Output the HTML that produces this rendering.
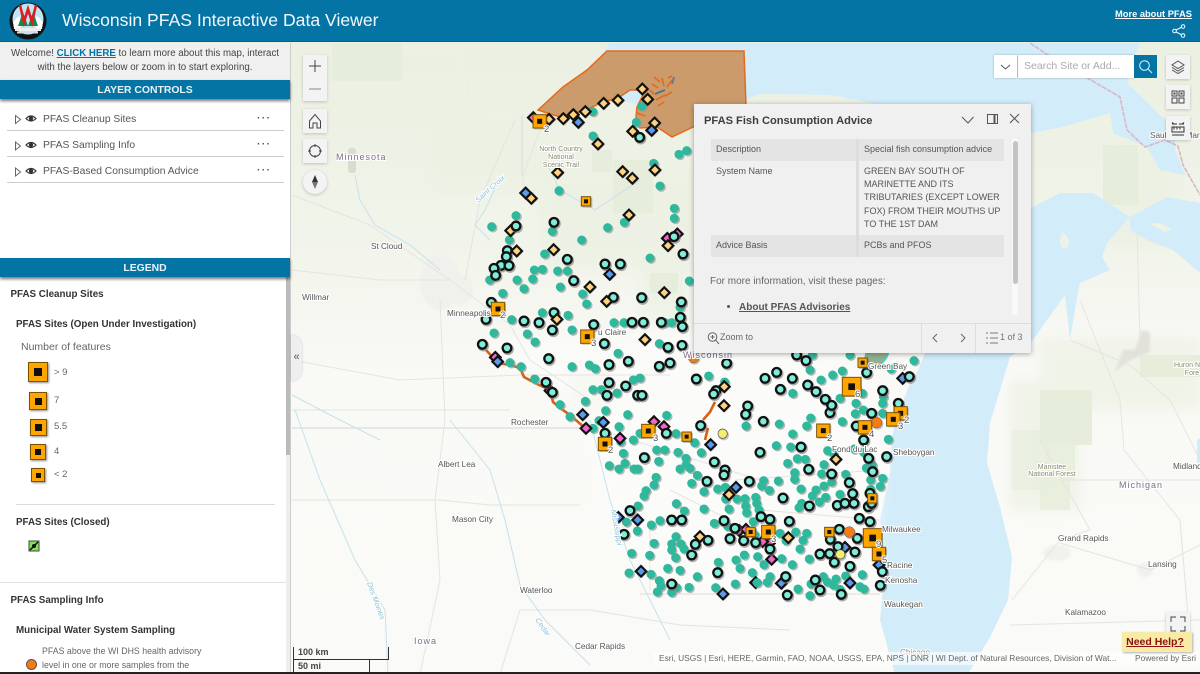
<!DOCTYPE html>
<html lang="en"><head><meta charset="utf-8"><title>Wisconsin PFAS Interactive Data Viewer</title>
<style>
*{box-sizing:border-box}
html,body{margin:0;padding:0;width:1200px;height:674px;overflow:hidden;background:#fff;font-family:"Liberation Sans",sans-serif}
.abs{position:absolute}
#map{position:absolute;left:0;top:0}
#hdr{position:absolute;left:0;top:0;width:1200px;height:42px;background:#0474a5;border-bottom:1px solid #03618a;color:#fff}
#title{position:absolute;left:62px;top:9px;font-size:17.6px;line-height:22px;white-space:nowrap;color:#f4f9fb}
#more{position:absolute;right:8px;top:8px;font-size:9.3px;font-weight:bold;text-decoration:underline;line-height:12px}
#panel{position:absolute;left:0;top:43px;width:291px;height:631px;background:#fff;border-right:1px solid #ccc}
.bar{position:absolute;left:0;width:290px;height:19px;background:#0474a5;color:#e9f3f7;font-weight:bold;font-size:10.4px;line-height:22px;text-align:center;box-shadow:0 2px 3px rgba(0,0,0,.55)}
.row{position:absolute;left:7px;width:277px;height:26px;border-bottom:1px solid #ccc;font-size:10.3px;color:#555;line-height:30px;padding-left:36px}
.dots{position:absolute;left:250px;top:-1px;font-size:10px;letter-spacing:1.5px;font-weight:bold;color:#555}
.t{position:absolute;white-space:nowrap;color:#333}
.b{font-weight:bold;font-size:9.8px;color:#333;margin-top:1.5px}
.g{font-size:9.5px;color:#666}
.sq{position:absolute;background:#ffa500;border:1.5px solid #7a5200;box-shadow:1px 1px 2px rgba(0,0,0,.45)}
.sq i{position:absolute;left:50%;top:50%;width:7px;height:7px;margin:-3.5px;background:#111;display:block}
.btn{position:absolute;background:#f3f3f3;box-shadow:0 1px 3px rgba(0,0,0,.2)}
#pop{position:absolute;left:694px;top:104px;width:337px;height:249px;background:#f0f0f0;box-shadow:0 1px 5px rgba(0,0,0,.35)}
#pop .c{position:absolute;font-size:9px;color:#555;line-height:13.2px;white-space:nowrap}
</style></head><body>
<svg id="map" width="1200" height="674" viewBox="0 0 1200 674" xmlns="http://www.w3.org/2000/svg">
<defs>
<filter id="bl"><feGaussianBlur stdDeviation="6"/></filter>
<filter id="bs"><feGaussianBlur stdDeviation="1.2"/></filter>
<linearGradient id="gr" x1="0" y1="0" x2="0" y2="1"><stop offset="0" stop-color="#e9efdf"/><stop offset=".35" stop-color="#f1f4ea"/><stop offset=".55" stop-color="#f9f9f6"/><stop offset="1" stop-color="#fafaf8"/></linearGradient>
<g id="t"><circle cx="4" cy="4" r="13.5" fill="#9a9a9a" opacity=".7"/><circle r="13.5" fill="#2fb89c"/></g>
<g id="c"><circle cx="3" cy="4" r="17.5" fill="#777" opacity=".6"/><circle r="13" fill="#7eeedb" stroke="#111" stroke-width="7"/></g>
<g id="d"><path d="M3 -14L20 3L3 20L-14 3Z" fill="#777" opacity=".5"/><path d="M0 -16L16 0L0 16L-16 0Z" fill="#ffd27d" stroke="#111" stroke-width="6.500"/></g>
<g id="b"><path d="M3 -14L20 3L3 20L-14 3Z" fill="#777" opacity=".5"/><path d="M0 -16L16 0L0 16L-16 0Z" fill="#5a9bf0" stroke="#111" stroke-width="6.500"/></g>
<g id="p"><path d="M0 -16L16 0L0 16L-16 0Z" fill="#f566cc" stroke="#111" stroke-width="6.500"/></g>
<g id="o"><circle cx="3" cy="4" r="17" fill="#888" opacity=".5"/><circle r="16" fill="#f57c14" stroke="#555" stroke-width="1.5"/></g>
<g id="y"><circle cx="3" cy="4" r="16" fill="#888" opacity=".5"/><circle r="14" fill="#f3ee70" stroke="#444" stroke-width="2"/></g>
<g id="s1"><rect x="-11" y="-11" width="30" height="30" fill="#666" opacity=".4"/><rect x="-14" y="-14" width="28" height="28" fill="#ffa500" stroke="#7a5200" stroke-width="3"/><rect x="-6" y="-6" width="12" height="12" fill="#111"/></g>
<g id="s2"><rect x="-17" y="-17" width="41" height="41" fill="#666" opacity=".4"/><rect x="-20" y="-20" width="40" height="40" fill="#ffa500" stroke="#7a5200" stroke-width="3"/><rect x="-7.500" y="-7.500" width="15" height="15" fill="#111"/></g>
<g id="s3"><rect x="-25" y="-25" width="56" height="56" fill="#666" opacity=".4"/><rect x="-28" y="-28" width="56" height="56" fill="#ffa500" stroke="#7a5200" stroke-width="3"/><rect x="-10" y="-10" width="20" height="20" fill="#111"/></g>
</defs>
<rect width="1200" height="674" fill="url(#gr)"/>
<!-- green patches -->
<g filter="url(#bl)" fill="#ecf1e3" opacity=".7">
<rect x="300" y="43" width="170" height="80"/><rect x="430" y="120" width="120" height="70"/><rect x="540" y="170" width="170" height="100"/><rect x="640" y="260" width="50" height="60"/><rect x="1060" y="200" width="120" height="50"/><rect x="1110" y="140" width="70" height="60"/><rect x="1040" y="340" width="160" height="70"/><rect x="1010" y="380" width="70" height="130"/><rect x="1140" y="60" width="60" height="40"/><rect x="760" y="98" width="60" height="12"/><rect x="570" y="370" width="40" height="40"/>
</g>
<g fill="#e6edda">
<rect x="332" y="44" width="70" height="37"/><rect x="613" y="160" width="40" height="53"/><rect x="592" y="150" width="20" height="22"/><rect x="650" y="273" width="28" height="20"/><rect x="1103" y="145" width="35" height="60"/><rect x="1040" y="390" width="52" height="55"/><rect x="1045" y="445" width="30" height="35" opacity=".8"/><rect x="1011" y="430" width="40" height="60" opacity=".5"/><rect x="1040" y="480" width="30" height="30" opacity=".8"/><rect x="1140" y="355" width="60" height="22"/>
</g>
<!-- water -->
<path d="M610 43H1140L1127 83L1150 105L1175 130L1175 150L1185 175L1160 170L1147 147L1113 133L1110 113L1063 127L1032 133L960 120L830 95L760 94L745 100L700 120L620 100L540 115L590 70Z" fill="#d2ecfa"/>
<path d="M1200 203L1167 197L1130 217L1130 230L1147 240L1173 250L1200 273Z" fill="#d2ecfa"/>
<path d="M1130 217L1093 193L1060 193L1031 208L960 300L930 345L925 353L918 370L910 383L897 417L892 437L890 473L880 520L885 567L880 620L895 674H968L990 637L1008 600L1012 557L1000 507L987 463L990 423L1010 357L1033 340L1047 320L1065 295L1070 340L1077 297L1080 283L1110 270L1102 257L1107 243Z" fill="#d2ecfa"/>
<path d="M1197 440L1200 438V465L1197 462Z" fill="#d2ecfa"/>
<path d="M1062 232C1068 235 1070 240 1068 247C1064 250 1060 248 1060 240Z" fill="#eef2e6"/>
<path d="M1150 224L1160 223L1172 229L1165 232Z" fill="#eef2e6"/>
<!-- WI interior lighter -->
<path d="M490 340L700 330L875 370L885 470L875 590L640 590L605 500L585 420Z" fill="#fdfdfc" filter="url(#bl)" opacity=".5"/>
<!-- cities -->
<g fill="#f0f0ec" filter="url(#bs)"><ellipse cx="440" cy="282" rx="20" ry="28"/><ellipse cx="460" cy="290" rx="13" ry="15"/><ellipse cx="1057" cy="553" rx="14" ry="8"/><ellipse cx="1145" cy="570" rx="8" ry="7"/></g>
<path d="M1123 350L1135 350L1142 330L1150 332L1150 352L1130 360L1115 372Z" fill="#e2e2da" filter="url(#bs)"/>
<rect x="348" y="148" width="8" height="25" fill="#d5dfcd" rx="3"/>
<!-- roads -->
<g fill="none" stroke="#e4e4e1" stroke-width="1">
<path d="M292 195L370 225L450 280L510 325L530 360L590 400"/><path d="M292 270L380 280H450"/><path d="M440 300L445 420L435 500L440 580L420 674"/><path d="M515 120L480 200L465 280"/><path d="M292 360L400 380L520 375H670"/><path d="M292 410H510"/><path d="M292 500H440L490 505H580"/><path d="M500 674L520 610H590L680 625L790 630"/><path d="M1080 300L1120 400L1124 450L1180 520L1190 640"/><path d="M1040 440L1090 530L1060 540L1012 600"/><path d="M1060 543L1150 570L1200 545"/><path d="M1010 625L1200 620"/><path d="M1060 480H1200"/><path d="M1070 340L1130 365L1170 400L1200 460"/><path d="M1137 230L1140 340"/><path d="M540 130L523 175V190"/><path d="M810 390L840 420M735 480L880 470M600 430L760 480M760 510L880 520M650 520V590M670 490L730 520"/>
</g>
<path d="M292 428H610" stroke="#dedade" stroke-width="1.2" fill="none"/>
<path d="M640 594L880 594M522 115V175" stroke="#dedade" stroke-width="1" fill="none"/>
<path d="M1030 43L1048 55L1120 97L1127 130L1145 147L1165 140L1178 146L1183 165L1200 195" stroke="#d9b6c8" stroke-width="1.6" fill="none" stroke-dasharray="5 1"/>
<!-- rivers -->
<g fill="none" stroke="#c5e2ec" stroke-width="1">
<path d="M355 175L360 200L375 225L410 245L440 270"/><path d="M292 395L340 420L380 440"/><path d="M295 410L320 480L355 560L385 610L388 674"/><path d="M500 178L485 210L475 225L490 240"/><path d="M450 420L490 470L505 520L520 585L545 620L590 665"/><path d="M590 420L610 500L630 560L670 640"/><path d="M545 160L560 190L595 210L640 180"/>
</g>
<!-- brown polygon -->
<path d="M538 110L563 87L587 70L607 51H744L746 106L693 127L672 137L657 127L640 128L636 117L637 107L643 95L642 90L630 90L618 98L603 102L590 108L563 118Z" fill="#cb9b6b" stroke="#e56a1c" stroke-width="1.5"/>
<g stroke="#e56a1c" stroke-width="1.6" fill="none"><path d="M654 77L660 82M652 84L658 88M662 78L664 86M668 78L672 76M672 80L667 87M640 86L645 90M650 90L654 94M665 96L672 92M656 100L665 95M643 100L640 110M637 113L645 116M634 120L640 124M658 106L664 102"/></g>
<path d="M672 84L674 77" stroke="#6a7a8a" stroke-width="2"/><path d="M655 94L665 90" stroke="#5a7080" stroke-width="2"/>
<!-- orange rivers -->
<g fill="none" stroke="#d95f14" stroke-width="2.6">
<path d="M486 350L498 363L510 365L520 368L524 377L535 383L550 390L553 402L560 408L570 415L585 428"/>
<path d="M715 402L710 412L703 420"/><path d="M708 428L705 440"/>
</g>
<path d="M866 352L889 352Q885 366 870 368L863 370Z" fill="#8fb18c" stroke="#2ed6e6" stroke-width="1.3"/>
<path d="M865 362L868 371" stroke="#e56a1c" stroke-width="1"/>
<!-- markers zoom5 -->
<g transform="translate(480,40) scale(.3333)">
<use href="#p" x="160" y="233"/>
<use href="#t" x="338" y="215"/><use href="#t" x="486" y="199"/><use href="#t" x="469" y="247"/><use href="#t" x="339" y="288"/><use href="#t" x="597" y="343"/><use href="#t" x="620" y="332"/><use href="#t" x="521" y="370"/><use href="#t" x="540" y="438"/><use href="#t" x="237" y="452"/><use href="#t" x="583" y="505"/><use href="#t" x="583" y="535"/><use href="#t" x="433" y="547"/><use href="#t" x="383" y="563"/><use href="#t" x="217" y="574"/><use href="#t" x="108" y="527"/><use href="#t" x="35" y="560"/><use href="#t" x="305" y="600"/><use href="#t" x="88" y="600"/>
<use href="#d" x="207" y="238"/><use href="#d" x="250" y="236"/><use href="#d" x="280" y="224"/><use href="#d" x="316" y="215"/><use href="#d" x="371" y="190"/><use href="#d" x="414" y="181"/><use href="#d" x="487" y="147"/><use href="#d" x="503" y="178"/><use href="#d" x="524" y="249"/><use href="#d" x="458" y="274"/><use href="#d" x="354" y="312"/><use href="#d" x="233" y="398"/><use href="#d" x="428" y="395"/><use href="#d" x="457" y="415"/><use href="#d" x="525" y="390"/><use href="#d" x="154" y="475"/><use href="#d" x="447" y="525"/><use href="#d" x="92" y="572"/>
<use href="#b" x="295" y="247"/><use href="#b" x="515" y="271"/><use href="#b" x="137" y="459"/>
<use href="#c" x="479" y="292"/><use href="#c" x="222" y="547"/><use href="#c" x="108" y="558"/>
<use href="#p" x="562" y="595"/><use href="#p" x="592" y="582"/><use href="#c" x="582" y="590"/>
<use href="#s2" x="179" y="244"/><use href="#s1" x="318" y="484"/>
</g>
<!-- zoom9 -->
<g transform="translate(470,240) scale(.3333)">
<use href="#t" x="224" y="42"/><use href="#t" x="540" y="54"/><use href="#t" x="193" y="90"/><use href="#t" x="217" y="88"/><use href="#t" x="263" y="93"/><use href="#t" x="292" y="93"/><use href="#t" x="141" y="120"/><use href="#t" x="188" y="117"/><use href="#t" x="162" y="146"/><use href="#t" x="271" y="141"/><use href="#t" x="338" y="162"/><use href="#t" x="350" y="192"/><use href="#t" x="59" y="120"/><use href="#t" x="98" y="160"/><use href="#t" x="217" y="218"/><use href="#t" x="294" y="226"/><use href="#t" x="125" y="239"/><use href="#t" x="72" y="279"/><use href="#t" x="172" y="282"/><use href="#t" x="195" y="306"/><use href="#t" x="306" y="270"/><use href="#t" x="658" y="123"/><use href="#t" x="630" y="202"/><use href="#t" x="585" y="248"/><use href="#t" x="605" y="248"/><use href="#t" x="462" y="248"/><use href="#t" x="432" y="248"/><use href="#t" x="568" y="311"/><use href="#t" x="444" y="340"/><use href="#t" x="120" y="368"/><use href="#t" x="153" y="380"/><use href="#t" x="306" y="380"/><use href="#t" x="358" y="375"/><use href="#t" x="376" y="386"/><use href="#t" x="716" y="408"/><use href="#t" x="764" y="426"/><use href="#t" x="194" y="417"/><use href="#t" x="490" y="420"/><use href="#t" x="510" y="414"/><use href="#t" x="394" y="449"/><use href="#t" x="369" y="449"/><use href="#t" x="441" y="459"/><use href="#t" x="346" y="484"/><use href="#t" x="270" y="494"/><use href="#t" x="300" y="530"/>
<use href="#p" x="76" y="352"/><use href="#b" x="83" y="365"/><use href="#p" x="240" y="452"/>
<use href="#c" x="112" y="32"/><use href="#c" x="109" y="50"/><use href="#c" x="93" y="76"/><use href="#c" x="117" y="77"/><use href="#c" x="72" y="85"/><use href="#c" x="77" y="106"/><use href="#c" x="292" y="58"/><use href="#c" x="405" y="72"/><use href="#c" x="451" y="72"/><use href="#c" x="311" y="122"/><use href="#c" x="515" y="173"/><use href="#c" x="430" y="172"/><use href="#c" x="634" y="186"/><use href="#c" x="631" y="232"/><use href="#c" x="637" y="260"/><use href="#c" x="48" y="238"/><use href="#c" x="162" y="243"/><use href="#c" x="207" y="248"/><use href="#c" x="247" y="270"/><use href="#c" x="252" y="218"/><use href="#c" x="64" y="187"/><use href="#c" x="371" y="254"/><use href="#c" x="486" y="247"/><use href="#c" x="520" y="247"/><use href="#c" x="574" y="247"/><use href="#c" x="639" y="42"/><use href="#c" x="37" y="313"/><use href="#c" x="111" y="324"/><use href="#c" x="236" y="356"/><use href="#c" x="403" y="311"/><use href="#c" x="475" y="364"/><use href="#c" x="594" y="322"/><use href="#c" x="636" y="316"/><use href="#c" x="417" y="374"/><use href="#c" x="568" y="379"/><use href="#c" x="600" y="369"/><use href="#c" x="679" y="417"/><use href="#c" x="738" y="452"/><use href="#c" x="731" y="462"/><use href="#c" x="417" y="428"/><use href="#c" x="467" y="438"/><use href="#c" x="411" y="466"/><use href="#c" x="503" y="466"/><use href="#c" x="516" y="466"/><use href="#c" x="228" y="427"/><use href="#c" x="247" y="457"/><use href="#c" x="770" y="370"/>
<use href="#d" x="140" y="33"/><use href="#d" x="251" y="29"/><use href="#d" x="594" y="17"/><use href="#d" x="360" y="141"/><use href="#d" x="410" y="184"/><use href="#d" x="583" y="158"/><use href="#d" x="261" y="238"/><use href="#d" x="525" y="299"/><use href="#d" x="763" y="440"/>
<use href="#b" x="419" y="103"/>
<use href="#s2" x="84" y="207"/><use href="#s2" x="352" y="290"/>
<use href="#o" x="671" y="353"/>
</g>
<!-- zoom10 -->
<g transform="translate(750,350) scale(.3333)">
<use href="#t" x="300" y="15"/><use href="#t" x="187" y="15"/><use href="#t" x="180" y="60"/><use href="#t" x="213" y="90"/><use href="#t" x="248" y="75"/><use href="#t" x="277" y="63"/><use href="#t" x="128" y="130"/><use href="#t" x="270" y="145"/><use href="#t" x="337" y="130"/><use href="#t" x="423" y="57"/><use href="#t" x="492" y="32"/><use href="#t" x="400" y="140"/>
<use href="#b" x="458" y="85"/>
<use href="#c" x="140" y="15"/><use href="#c" x="168" y="32"/><use href="#c" x="80" y="67"/><use href="#c" x="45" y="85"/><use href="#c" x="127" y="85"/><use href="#c" x="173" y="105"/><use href="#c" x="198" y="125"/><use href="#c" x="91" y="118"/><use href="#c" x="226" y="148"/><use href="#c" x="350" y="68"/><use href="#c" x="398" y="122"/><use href="#c" x="478" y="80"/>
<use href="#s1" x="338" y="38"/>
<use href="#s3" x="305" y="110"/>
</g>
<!-- zoom6 -->
<g transform="translate(580,400) scale(.3333)">
<use href="#t" x="77" y="32"/><use href="#t" x="143" y="44"/><use href="#t" x="260" y="46"/><use href="#t" x="57" y="62"/><use href="#t" x="117" y="80"/><use href="#t" x="39" y="85"/><use href="#t" x="498" y="78"/><use href="#t" x="598" y="72"/><use href="#t" x="692" y="54"/><use href="#t" x="680" y="78"/><use href="#t" x="787" y="65"/><use href="#t" x="826" y="41"/><use href="#t" x="850" y="30"/><use href="#t" x="828" y="10"/><use href="#t" x="908" y="10"/><use href="#t" x="908" y="40"/><use href="#t" x="825" y="78"/><use href="#t" x="638" y="102"/><use href="#t" x="288" y="101"/><use href="#t" x="180" y="100"/><use href="#t" x="122" y="125"/><use href="#t" x="160" y="120"/><use href="#t" x="344" y="128"/><use href="#t" x="589" y="137"/><use href="#t" x="632" y="141"/><use href="#t" x="925" y="118"/><use href="#t" x="230" y="150"/><use href="#t" x="254" y="150"/><use href="#t" x="294" y="157"/><use href="#t" x="364" y="158"/><use href="#t" x="743" y="152"/><use href="#t" x="760" y="160"/><use href="#t" x="822" y="147"/><use href="#t" x="851" y="157"/><use href="#t" x="130" y="160"/><use href="#t" x="135" y="190"/><use href="#t" x="88" y="197"/><use href="#t" x="117" y="207"/><use href="#t" x="162" y="207"/><use href="#t" x="174" y="207"/><use href="#t" x="236" y="184"/><use href="#t" x="318" y="175"/><use href="#t" x="318" y="195"/><use href="#t" x="300" y="207"/><use href="#t" x="330" y="205"/><use href="#t" x="352" y="226"/><use href="#t" x="623" y="190"/><use href="#t" x="652" y="176"/><use href="#t" x="676" y="178"/><use href="#t" x="644" y="218"/><use href="#t" x="644" y="238"/><use href="#t" x="732" y="194"/><use href="#t" x="725" y="222"/><use href="#t" x="859" y="204"/><use href="#t" x="877" y="195"/><use href="#t" x="878" y="215"/><use href="#t" x="797" y="223"/><use href="#t" x="228" y="232"/><use href="#t" x="222" y="255"/><use href="#t" x="198" y="272"/><use href="#t" x="192" y="288"/><use href="#t" x="335" y="250"/><use href="#t" x="372" y="275"/><use href="#t" x="413" y="267"/><use href="#t" x="436" y="262"/><use href="#t" x="551" y="242"/><use href="#t" x="545" y="258"/><use href="#t" x="568" y="271"/><use href="#t" x="595" y="243"/><use href="#t" x="663" y="267"/><use href="#t" x="708" y="270"/><use href="#t" x="732" y="258"/><use href="#t" x="755" y="246"/><use href="#t" x="697" y="288"/><use href="#t" x="737" y="292"/><use href="#t" x="718" y="306"/><use href="#t" x="780" y="283"/><use href="#t" x="872" y="240"/><use href="#t" x="908" y="235"/><use href="#t" x="901" y="259"/><use href="#t" x="872" y="268"/><use href="#t" x="437" y="297"/><use href="#t" x="471" y="297"/><use href="#t" x="495" y="296"/><use href="#t" x="527" y="292"/><use href="#t" x="530" y="310"/><use href="#t" x="497" y="318"/><use href="#t" x="447" y="327"/><use href="#t" x="500" y="338"/><use href="#t" x="537" y="330"/><use href="#t" x="665" y="310"/><use href="#t" x="657" y="323"/><use href="#t" x="174" y="318"/><use href="#t" x="289" y="311"/><use href="#t" x="313" y="333"/><use href="#t" x="372" y="327"/><use href="#t" x="139" y="366"/><use href="#t" x="214" y="375"/><use href="#t" x="240" y="362"/><use href="#t" x="403" y="370"/><use href="#t" x="443" y="379"/><use href="#t" x="172" y="393"/><use href="#t" x="288" y="410"/><use href="#t" x="222" y="430"/><use href="#t" x="275" y="432"/><use href="#t" x="275" y="450"/><use href="#t" x="303" y="432"/><use href="#t" x="312" y="447"/><use href="#t" x="647" y="396"/><use href="#t" x="680" y="400"/><use href="#t" x="669" y="421"/><use href="#t" x="660" y="447"/><use href="#t" x="605" y="476"/><use href="#t" x="155" y="460"/><use href="#t" x="209" y="466"/><use href="#t" x="287" y="473"/><use href="#t" x="415" y="487"/><use href="#t" x="468" y="480"/><use href="#t" x="493" y="465"/><use href="#t" x="533" y="470"/><use href="#t" x="480" y="505"/><use href="#t" x="552" y="494"/><use href="#t" x="637" y="494"/><use href="#t" x="688" y="477"/><use href="#t" x="263" y="505"/><use href="#t" x="300" y="511"/><use href="#t" x="352" y="530"/><use href="#t" x="517" y="518"/><use href="#t" x="213" y="523"/><use href="#t" x="147" y="519"/><use href="#t" x="238" y="542"/><use href="#t" x="243" y="558"/><use href="#t" x="232" y="576"/><use href="#t" x="275" y="577"/><use href="#t" x="290" y="563"/><use href="#t" x="327" y="562"/><use href="#t" x="407" y="563"/><use href="#t" x="466" y="552"/><use href="#t" x="562" y="547"/><use href="#t" x="570" y="530"/><use href="#t" x="654" y="567"/><use href="#t" x="690" y="587"/><use href="#t" x="693" y="552"/><use href="#t" x="730" y="530"/><use href="#t" x="742" y="546"/><use href="#t" x="768" y="537"/><use href="#t" x="760" y="555"/><use href="#t" x="797" y="528"/><use href="#t" x="847" y="524"/><use href="#t" x="840" y="560"/><use href="#t" x="852" y="567"/><use href="#t" x="780" y="568"/><use href="#t" x="525" y="405"/><use href="#t" x="525" y="432"/><use href="#t" x="618" y="422"/><use href="#t" x="600" y="400"/><use href="#t" x="520" y="365"/><use href="#t" x="515" y="392"/>
<use href="#b" x="8" y="44"/><use href="#b" x="70" y="67"/><use href="#b" x="392" y="134"/><use href="#b" x="468" y="262"/><use href="#b" x="115" y="352"/><use href="#b" x="173" y="360"/><use href="#b" x="183" y="514"/><use href="#b" x="429" y="582"/><use href="#b" x="604" y="550"/><use href="#b" x="810" y="549"/><use href="#b" x="795" y="442"/><use href="#b" x="897" y="495"/><use href="#b" x="527" y="548"/>
<use href="#p" x="18" y="85"/><use href="#p" x="222" y="65"/><use href="#p" x="252" y="80"/><use href="#p" x="120" y="115"/><use href="#p" x="575" y="478"/><use href="#p" x="568" y="430"/><use href="#p" x="478" y="392"/><use href="#p" x="498" y="388"/><use href="#p" x="548" y="425"/>
<use href="#t" x="532" y="548"/>
<use href="#c" x="503" y="18"/><use href="#c" x="497" y="43"/><use href="#c" x="550" y="64"/><use href="#c" x="750" y="38"/><use href="#c" x="362" y="77"/><use href="#c" x="755" y="16"/><use href="#c" x="875" y="40"/><use href="#c" x="955" y="10"/><use href="#c" x="75" y="100"/><use href="#c" x="259" y="100"/><use href="#c" x="540" y="157"/><use href="#c" x="403" y="186"/><use href="#c" x="193" y="173"/><use href="#c" x="663" y="141"/><use href="#c" x="686" y="208"/><use href="#c" x="435" y="210"/><use href="#c" x="432" y="225"/><use href="#c" x="381" y="244"/><use href="#c" x="508" y="244"/><use href="#c" x="755" y="222"/><use href="#c" x="808" y="248"/><use href="#c" x="609" y="294"/><use href="#c" x="818" y="281"/><use href="#c" x="688" y="318"/><use href="#c" x="772" y="316"/><use href="#c" x="795" y="310"/><use href="#c" x="822" y="310"/><use href="#c" x="150" y="332"/><use href="#c" x="275" y="360"/><use href="#c" x="305" y="360"/><use href="#c" x="432" y="362"/><use href="#c" x="543" y="350"/><use href="#c" x="570" y="358"/><use href="#c" x="628" y="364"/><use href="#c" x="465" y="385"/><use href="#c" x="838" y="355"/><use href="#c" x="870" y="365"/><use href="#c" x="132" y="403"/><use href="#c" x="450" y="416"/><use href="#c" x="491" y="422"/><use href="#c" x="527" y="428"/><use href="#c" x="335" y="465"/><use href="#c" x="346" y="433"/><use href="#c" x="384" y="421"/><use href="#c" x="413" y="518"/><use href="#c" x="275" y="552"/><use href="#c" x="617" y="530"/><use href="#c" x="706" y="540"/><use href="#c" x="720" y="570"/><use href="#c" x="622" y="585"/><use href="#c" x="784" y="583"/><use href="#c" x="720" y="462"/><use href="#c" x="749" y="461"/><use href="#c" x="778" y="388"/><use href="#c" x="751" y="418"/><use href="#c" x="774" y="440"/><use href="#c" x="825" y="456"/><use href="#c" x="763" y="487"/><use href="#c" x="810" y="499"/><use href="#c" x="907" y="515"/><use href="#c" x="901" y="556"/><use href="#c" x="920" y="170"/><use href="#c" x="870" y="280"/><use href="#c" x="865" y="320"/><use href="#c" x="875" y="310"/><use href="#c" x="829" y="78"/><use href="#c" x="851" y="120"/><use href="#c" x="866" y="175"/><use href="#c" x="878" y="215"/><use href="#c" x="570" y="447"/><use href="#c" x="832" y="415"/>
<use href="#d" x="432" y="17"/><use href="#d" x="768" y="178"/><use href="#d" x="447" y="284"/><use href="#d" x="360" y="410"/><use href="#d" x="625" y="413"/>
<use href="#o" x="890" y="68"/><use href="#o" x="808" y="396"/><use href="#y" x="428" y="101"/><use href="#y" x="781" y="463"/>
<use href="#s1" x="320" y="110"/><use href="#s1" x="512" y="396"/><use href="#s1" x="748" y="396"/><use href="#s1" x="877" y="295"/>
<use href="#s2" x="75" y="132"/><use href="#s2" x="205" y="93"/><use href="#s2" x="730" y="92"/><use href="#s2" x="962" y="40"/><use href="#s2" x="940" y="58"/><use href="#s2" x="855" y="82"/><use href="#s2" x="565" y="396"/><use href="#s3" x="878" y="414"/><use href="#s2" x="897" y="462"/>
</g>
<!-- cluster numbers -->
<g font-family="Liberation Sans,sans-serif" font-size="9.500" fill="#555" stroke="#fff" stroke-width="2" paint-order="stroke">
<text x="544" y="132">2</text><text x="500" y="318">2</text><text x="591" y="346">3</text><text x="855" y="397">6</text>
<text x="608" y="453">2</text><text x="653" y="441">3</text><text x="827" y="441">2</text><text x="869" y="437">4</text><text x="898" y="429">3</text><text x="904" y="423">2</text><text x="771" y="542">3</text><text x="876" y="547">9</text><text x="882" y="563">5</text>
</g>
<!-- labels -->
<g font-family="Liberation Sans,sans-serif" font-size="8.200" fill="#555" stroke="#fff" stroke-width="2" paint-order="stroke">
<text x="371" y="249">St Cloud</text><text x="302" y="300">Willmar</text><text x="447" y="316">Minneapolis</text><text x="511" y="425">Rochester</text><text x="438" y="467">Albert Lea</text><text x="452" y="522">Mason City</text><text x="520" y="593">Waterloo</text><text x="575" y="649">Cedar Rapids</text><text x="598" y="335">u Claire</text><text x="832" y="452">Fond du Lac</text><text x="893" y="455">Sheboygan</text><text x="882" y="532">Milwaukee</text><text x="887" y="568">Racine</text><text x="885" y="583">Kenosha</text><text x="884" y="607">Waukegan</text><text x="1058" y="541">Grand Rapids</text><text x="1148" y="567">Lansing</text><text x="1065" y="615">Kalamazoo</text><text x="1173" y="469">Midland</text><text x="868" y="369">Green Bay</text><text x="900" y="655" fill="#888">Chicago</text><text x="1150" y="138">Sault Ste Marie</text>
<g font-size="7" fill="#8a8a70" text-anchor="middle"><text x="561" y="151">North Country</text><text x="561" y="159">National</text><text x="561" y="167">Scenic Trail</text><text x="1052" y="469">Manistee</text><text x="1052" y="476">National Forest</text><text x="1187" y="367">Huron N</text><text x="1192" y="375">Fore</text></g>
<g fill="#7d6f85" letter-spacing="1" font-size="9"><text x="336" y="160">Minnesota</text><text x="414" y="644">Iowa</text><text x="1119" y="488">Michigan</text><text x="683" y="358">Wisconsin</text></g>
<g fill="#8cc0d4" font-size="7.500" font-style="italic"><text transform="translate(478,203) rotate(-42)">Saint Croix</text><text transform="translate(367,583) rotate(70)">Des Moines</text><text transform="translate(535,620) rotate(55)">Cedar</text><text transform="translate(611,510) rotate(80)">Mississippi</text></g>
</g>
</svg>

<!-- map UI -->
<div class="btn" style="left:303px;top:55px;width:24px;height:46px"><svg width="24" height="46"><path d="M6 11H18M12 5V17" stroke="#444" stroke-width="1" fill="none"/><path d="M6 34H18" stroke="#999" stroke-width="1.2"/></svg></div>
<div class="btn" style="left:303px;top:109px;width:24px;height:24px"><svg width="24" height="24"><path d="M6.5 12L12 5.5L17.5 12V19H14V14H10V19H6.5Z" fill="none" stroke="#444"/></svg></div>
<div class="btn" style="left:303px;top:139px;width:24px;height:24px"><svg width="24" height="24"><circle cx="12" cy="12" r="5.5" fill="none" stroke="#444"/><path d="M12 5V8M12 16V19M5 12H8M16 12H19" stroke="#444"/></svg></div>
<div class="btn" style="left:303px;top:170px;width:24px;height:24px;border-radius:12px"><svg width="24" height="24"><path d="M12 5L15 12H9Z" fill="#333"/><path d="M12 19L15 12H9Z" fill="#777"/></svg></div>
<div class="abs" style="left:1018px;top:55px;width:116px;height:23px;background:#fff;font-size:10.5px;line-height:23px;color:#aaa;padding-left:6px;box-shadow:0 0 2px rgba(0,0,0,.3)">Search Site or Add...</div>
<div class="abs" style="left:994px;top:55px;width:23px;height:23px;background:#fff;box-shadow:0 0 2px rgba(0,0,0,.3)"><svg width="23" height="23"><path d="M7 10L11.5 14L16 10" stroke="#555" fill="none"/></svg></div>
<div class="abs" style="left:1134px;top:55px;width:23px;height:23px;background:#0474a5"><svg width="23" height="23"><circle cx="10.5" cy="10.5" r="4.8" stroke="#e6f2f7" fill="none"/><path d="M14 14L18 18" stroke="#e6f2f7"/></svg></div>
<div class="btn" style="left:1166px;top:55px;width:24px;height:24px"><svg width="24" height="24"><path d="M12 6L18 10L12 13.5L6 10Z M6 12.5L12 16L18 12.5 M6 15L12 18.5L18 15" fill="none" stroke="#555"/></svg></div>
<div class="btn" style="left:1166px;top:85px;width:24px;height:24px"><svg width="24" height="24"><path d="M6 6H11V11H6Z M13 6H18V11H13Z M6 13H11V18H6Z M13 13H18V18H13Z M8 8H9V9H8Z M15 8H16V9H15Z" fill="none" stroke="#444"/></svg></div>
<div class="btn" style="left:1166px;top:116px;width:24px;height:24px"><svg width="24" height="24"><path d="M6 11H18V16H6Z M6 19H18 M8 8L6 6.5 M16 8L18 6.5 M6 8H11 M13 8H18" fill="none" stroke="#333"/><path d="M8 11V13.5M11 11V13.5M14 11V13.5" stroke="#333"/></svg></div>

<!-- popup -->
<div id="pop">
<div class="abs" style="left:10px;top:11px;font-size:11.1px;font-weight:bold;color:#3d3d3d;white-space:nowrap">PFAS Fish Consumption Advice</div>
<svg class="abs" style="left:262px;top:6px" width="70" height="20"><path d="M6 7L12 13L17.5 7" fill="none" stroke="#555"/><rect x="31.5" y="4.5" width="10" height="9" fill="none" stroke="#555"/><path d="M38.5 4.5V13.5" stroke="#555" stroke-width="2"/><path d="M54 4L63 13M63 4L54 13" stroke="#555" fill="none"/></svg>
<div class="abs" style="left:17px;top:35px;width:293px;height:22px;background:#e4e4e4"></div>
<div class="abs" style="left:17px;top:131px;width:293px;height:22px;background:#e4e4e4"></div>
<div class="abs" style="left:162px;top:35px;width:3px;height:118px;background:#ddd"></div>
<div class="c" style="left:22px;top:39px">Description</div><div class="c" style="left:170px;top:39px">Special fish consumption advice</div>
<div class="c" style="left:22px;top:61px">System Name</div>
<div class="c" style="left:170px;top:61px">GREEN BAY SOUTH OF<br>MARINETTE AND ITS<br>TRIBUTARIES (EXCEPT LOWER<br>FOX) FROM THEIR MOUTHS UP<br>TO THE 1ST DAM</div>
<div class="c" style="left:22px;top:135px">Advice Basis</div><div class="c" style="left:170px;top:135px">PCBs and PFOS</div>
<div class="c" style="left:16px;top:171px;font-size:10px;color:#666">For more information, visit these pages:</div>
<div class="abs" style="left:33px;top:201px;width:3px;height:3px;border-radius:50%;background:#555"></div>
<div class="c" style="left:45px;top:197px;font-size:10px;font-weight:bold;text-decoration:underline;color:#555">About PFAS Advisories</div>
<div class="abs" style="left:318px;top:35px;width:6px;height:176px;background:#f9f9f9"></div>
<div class="abs" style="left:318.5px;top:37px;width:5px;height:143px;background:#c4c4c4;border-radius:3px"></div>
<div class="abs" style="left:0;top:219px;width:337px;height:1px;background:#ddd"></div>
<div class="abs" style="left:227px;top:219px;width:1px;height:30px;background:#ddd"></div>
<div class="abs" style="left:281px;top:219px;width:1px;height:30px;background:#ddd"></div>
<svg class="abs" style="left:0;top:220px" width="337" height="29"><circle cx="18.5" cy="13" r="4.3" fill="none" stroke="#666"/><path d="M21.5 16L25 20M16.500 13H20.500M18.500 11V15" stroke="#666" fill="none"/><path d="M243 10L239 14L243 18M267 10L271 14L267 18" stroke="#666" fill="none"/><path d="M296 9H304M296 14H304M296 19H304M292 9H294M292 14H294M292 19H294" stroke="#777" fill="none"/></svg>
<div class="c" style="left:26px;top:227px;color:#666">Zoom to</div>
<div class="c" style="left:306px;top:227px;color:#777">1 of 3</div>
</div>

<!-- bottom right -->
<div class="abs" style="left:654px;top:652px;width:546px;height:13px;background:rgba(255,255,255,.62);font-size:8.4px;line-height:13px;color:#666;white-space:nowrap;overflow:hidden"><span class="abs" style="left:5px">Esri, USGS | Esri, HERE, Garmin, FAO, NOAA, USGS, EPA, NPS | DNR | WI Dept. of Natural Resources, Division of Wat...</span><span class="abs" style="right:4px">Powered by Esri</span></div>
<div class="btn" style="left:1166px;top:612px;width:24px;height:24px"><svg width="24" height="24"><path d="M5 10V5H10M14 5H19V10M19 14V19H14M10 19H5V14" fill="none" stroke="#444"/></svg></div>
<div class="abs" style="left:1122px;top:632px;width:70px;height:20px;background:#f8eba6;box-shadow:1px 1px 2px rgba(0,0,0,.3);color:#8b1010;font-weight:bold;font-size:10.5px;line-height:20px;text-align:center;text-decoration:underline;padding-right:4px">Need Help?</div>

<!-- scalebar -->
<div class="abs" style="left:293px;top:647px;width:96px;height:13px;border:1px solid #333;border-top:0;border-width:0 1px 1.5px 1px;font-size:9px;font-weight:bold;color:#444;line-height:11px;padding-left:4px">100 km</div>
<div class="abs" style="left:293px;top:660px;width:77px;height:13px;border-left:1px solid #333;border-right:1px solid #333;font-size:9px;font-weight:bold;color:#444;line-height:12px;padding-left:4px">50 mi</div>

<!-- header -->
<div id="hdr">
<svg class="abs" style="left:9px;top:2px" width="38" height="38" viewBox="0 0 38 38">
<circle cx="19" cy="19" r="18.5" fill="#111"/><circle cx="19" cy="17" r="15.5" fill="#bfe6f2"/>
<path d="M4 20L10 14L14 22L10 27H5Z" fill="#fff"/><path d="M34 20L28 14L24 22L28 27H33Z" fill="#fff"/>
<path d="M9 24L14 10L19 24ZM19 24L24 10L29 24Z" fill="#138a4a"/>
<path d="M11 3L15 20L19 7L23 20L27 3" fill="none" stroke="#e01b24" stroke-width="2.6"/>
<rect x="6" y="26" width="26" height="3" fill="#eee"/><rect x="8" y="29.5" width="5" height="2" fill="#ddd"/><rect x="16" y="29.5" width="5" height="2" fill="#ddd"/><rect x="24" y="29.5" width="5" height="2" fill="#ddd"/>
</svg>
<div id="title">Wisconsin PFAS Interactive Data Viewer</div>
<div id="more">More about PFAS</div>
<svg class="abs" style="left:1172px;top:24px" width="14" height="14"><circle cx="2.5" cy="7" r="1.8" fill="none" stroke="#fff"/><circle cx="11" cy="2.5" r="1.8" fill="none" stroke="#fff"/><circle cx="11" cy="11.5" r="1.8" fill="none" stroke="#fff"/><path d="M4 6L9.5 3.3M4 8L9.5 10.7" stroke="#fff"/></svg>
</div>

<!-- panel -->
<div id="panel">
<div class="abs" style="left:0;top:0;width:290px;height:37px;background:#f0f0f0;text-align:center;font-size:9.7px;line-height:14px;color:#444;padding-top:4px">Welcome! <b style="color:#0474a5;text-decoration:underline">CLICK HERE</b> to learn more about this map, interact<br>with the layers below or zoom in to start exploring.</div>
<div class="bar" style="top:37px">LAYER CONTROLS</div>
<div class="row" style="top:62px">PFAS Cleanup Sites<span class="dots">···</span></div>
<div class="row" style="top:88px">PFAS Sampling Info<span class="dots">···</span></div>
<div class="row" style="top:114px">PFAS-Based Consumption Advice<span class="dots">···</span></div>
<svg class="abs" style="left:0;top:63px" width="45" height="80"><g fill="none" stroke="#666"><path d="M15.5 9.5V17.5L20.5 13.5Z"/><path d="M15.5 36V44L20.5 40Z"/><path d="M15.5 62V70L20.5 66Z"/></g><g fill="none" stroke="#333" stroke-width="1.2"><path d="M26 12.5Q31 7.500 36 12.5Q31 17.500 26 12.5Z"/><path d="M26 39Q31 34 36 39Q31 44 26 39Z"/><path d="M26 65Q31 60 36 65Q31 70 26 65Z"/></g><circle cx="31" cy="12.500" r="2.200" fill="#333"/><circle cx="31" cy="39" r="2.200" fill="#333"/><circle cx="31" cy="65" r="2.200" fill="#333"/></svg>
<div class="abs" style="left:286px;top:234px;width:4px;height:397px;background:#eee"></div>
<div class="abs" style="left:286px;top:234px;width:4px;height:178px;background:#bbb"></div>
<div class="bar" style="top:215px">LEGEND</div>
<div class="t b" style="left:10.500px;top:244px">PFAS Cleanup Sites</div>
<div class="t b" style="left:16px;top:274px">PFAS Sites (Open Under Investigation)</div>
<div class="t" style="left:21px;top:298px;font-size:10.500px;color:#666">Number of features</div>
<div class="sq" style="left:27.500px;top:319px;width:20px;height:20px"><i style="width:8px;height:8px;margin:-4px"></i></div>
<div class="sq" style="left:29px;top:349px;width:18px;height:18px"><i></i></div>
<div class="sq" style="left:29.500px;top:376px;width:17px;height:17px"><i></i></div>
<div class="sq" style="left:30px;top:401px;width:16px;height:16px"><i style="width:6px;height:6px;margin:-3px"></i></div>
<div class="sq" style="left:31px;top:425px;width:14px;height:14px"><i style="width:5px;height:5px;margin:-2.500px"></i></div>
<div class="t g" style="left:54px;top:324px">&gt; 9</div><div class="t g" style="left:54px;top:352px">7</div><div class="t g" style="left:54px;top:378px">5.5</div><div class="t g" style="left:54px;top:403px">4</div><div class="t g" style="left:54px;top:426px">&lt; 2</div>
<div class="abs" style="left:16px;top:461px;width:259px;height:1px;background:#ddd"></div>
<div class="t b" style="left:16px;top:472px">PFAS Sites (Closed)</div>
<svg class="abs" style="left:28px;top:497px" width="12" height="12"><rect x="1" y="1" width="10" height="10" fill="#7fe05a" stroke="#444"/><path d="M2 10L10 2" stroke="#111" stroke-width="1.500"/><circle cx="6" cy="6" r="2" fill="#111"/></svg>
<div class="abs" style="left:0;top:539px;width:286px;height:1px;background:#e3e3e3"></div>
<div class="t b" style="left:10.500px;top:550px">PFAS Sampling Info</div>
<div class="t b" style="left:16px;top:580px">Municipal Water System Sampling</div>
<div class="t" style="left:42px;top:602px;font-size:8.800px;line-height:13.500px;color:#666">PFAS above the WI DHS health advisory<br>level in one or more samples from the</div>
<div class="abs" style="left:26px;top:616px;width:11px;height:11px;border-radius:50%;background:#f57c14;border:1px solid #555"></div>
</div>
<div class="abs" style="left:291px;top:335px;width:11px;height:46px;background:#efefef;border-radius:0 11px 11px 0;box-shadow:0 0 2px rgba(0,0,0,.2);font-size:11px;line-height:44px;color:#555;text-align:center">«</div>
<div class="abs" style="left:0;top:672px;width:1200px;height:2px;background:#222"></div>
</body></html>
